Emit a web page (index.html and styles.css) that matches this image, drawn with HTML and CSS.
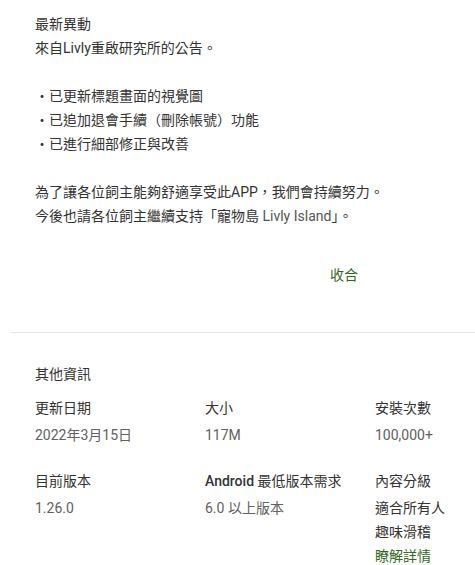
FILE: index.html
```html
<!DOCTYPE html>
<html lang="zh-Hant">
<head>
<meta charset="utf-8">
<link rel="stylesheet" href="styles.css">
</head>
<body>
<section class="changes">
  <div class="title">最新異動</div>
  <div class="text">來自Livly重啟研究所的公告。</div>
  <div class="text blank">&nbsp;</div>
  <div class="text">・已更新標題畫面的視覺圖</div>
  <div class="text">・已追加退會手續（刪除帳號）功能</div>
  <div class="text">・已進行細部修正與改善</div>
  <div class="text blank">&nbsp;</div>
  <div class="text">為了讓各位飼主能夠舒適享受此APP，我們會持續努力。</div>
  <div class="text">今後也請各位飼主繼續支持「寵物島 <span class="latin">Livly Island</span>」。</div>
  <div class="actions"><span class="link">收合</span></div>
</section>
<hr class="sep">
<section class="info">
  <div class="title">其他資訊</div>
  <div class="grid">
    <div class="item">
      <div class="label">更新日期</div>
      <div class="value">2022年3月15日</div>
    </div>
    <div class="item">
      <div class="label">大小</div>
      <div class="value">117M</div>
    </div>
    <div class="item">
      <div class="label">安裝次數</div>
      <div class="value">100,000+</div>
    </div>
    <div class="item">
      <div class="label">目前版本</div>
      <div class="value">1.26.0</div>
    </div>
    <div class="item">
      <div class="label"><span class="strong">Android</span> 最低版本需求</div>
      <div class="value">6.0 以上版本</div>
    </div>
    <div class="item">
      <div class="label">內容分級</div>
      <div class="value dark">適合所有人</div>
      <div class="value dark">趣味滑稽</div>
      <div class="value link">瞭解詳情</div>
    </div>
  </div>
</section>
</body>
</html>
```
FILE: styles.css
```css
html, body {
  margin: 0;
  padding: 0;
  background: #fff;
}
body {
  font-family: Roboto, "Noto Sans CJK TC", sans-serif;
  font-size: 14px;
  line-height: 24px;
  color: #333;
  width: 475px;
  overflow: hidden;
}
.changes {
  padding: 12px 0 0 35px;
}
.title {
  color: #333;
  font-weight: 400;
}
.text {
  color: #333;
}
.latin {
  color: #555;
}
.actions {
  padding: 35px 0 45px 295px;
  height: 24px;
}
.link {
  color: #33691e;
}
.sep {
  margin: 0 0 0 10px;
  border: none;
  border-top: 1px solid #e6e6e6;
  height: 0;
}
.info {
  padding: 29px 0 0 35px;
}
.grid {
  display: grid;
  grid-template-columns: 170px 170px 1fr;
  row-gap: 22px;
  margin-top: 10px;
}
.label {
  font-weight: 400;
  color: #333;
  margin-bottom: 3px;
}
.strong {
  font-weight: 500;
}
.value {
  color: #616161;
}
.value.dark {
  color: #333;
}
.value.link {
  color: #33691e;
}
```
